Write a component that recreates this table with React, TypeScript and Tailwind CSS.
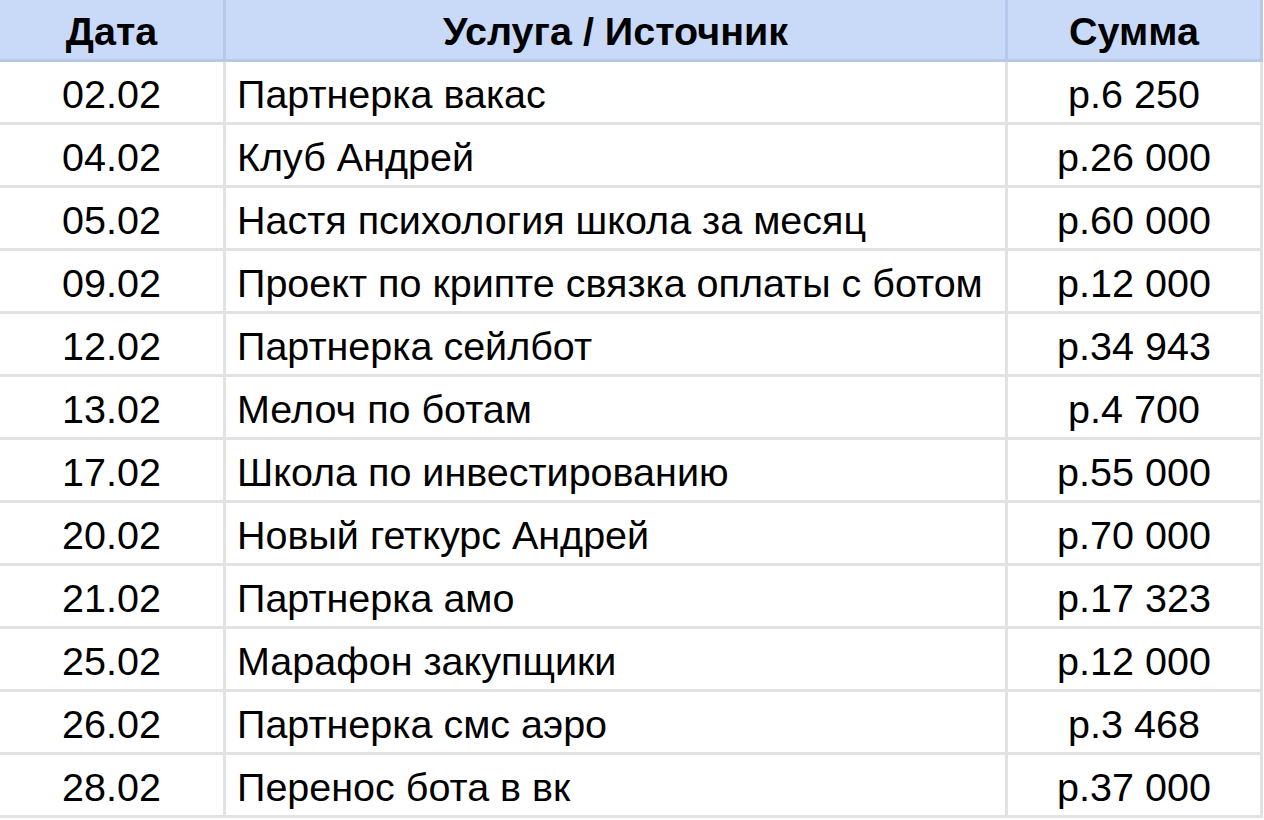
const rows = [
  ["02.02", "Партнерка вакас", "р.6 250"],
  ["04.02", "Клуб Андрей", "р.26 000"],
  ["05.02", "Настя психология школа за месяц", "р.60 000"],
  ["09.02", "Проект по крипте связка оплаты с ботом", "р.12 000"],
  ["12.02", "Партнерка сейлбот", "р.34 943"],
  ["13.02", "Мелоч по ботам", "р.4 700"],
  ["17.02", "Школа по инвестированию", "р.55 000"],
  ["20.02", "Новый геткурс Андрей", "р.70 000"],
  ["21.02", "Партнерка амо", "р.17 323"],
  ["25.02", "Марафон закупщики", "р.12 000"],
  ["26.02", "Партнерка смс аэро", "р.3 468"],
  ["28.02", "Перенос бота в вк", "р.37 000"],
];

export default function App() {
  return (
    <div className="w-[1264px] h-[820px] bg-white overflow-hidden font-['Liberation_Sans',Arial,sans-serif] text-black text-[39.5px] leading-none">
      <div className="grid grid-cols-[226px_782px_255px]">
        <div className="h-[62px] pt-[5px] bg-[#c9daf8] border-r-[3px] border-b-[3px] border-[#b7c9ea] flex items-center justify-center font-bold">
          Дата
        </div>
        <div className="h-[62px] pt-[5px] bg-[#c9daf8] border-r-[3px] border-b-[3px] border-[#b7c9ea] flex items-center justify-center font-bold">
          Услуга / Источник
        </div>
        <div className="h-[62px] pt-[5px] bg-[#c9daf8] border-r-[3px] border-b-[3px] border-[#b7c9ea] flex items-center justify-center font-bold">
          Сумма
        </div>
        {rows.map(([date, name, sum]) => (
          <div key={date} className="contents">
            <div className="h-[63px] pt-[6px] border-r-[3px] border-b-[3px] border-[#e2e2e2] flex items-center justify-center">
              {date}
            </div>
            <div className="h-[63px] pt-[6px] border-r-[3px] border-b-[3px] border-[#e2e2e2] flex items-center pl-[11px] whitespace-nowrap">
              {name}
            </div>
            <div className="h-[63px] pt-[6px] border-r-[3px] border-b-[3px] border-[#e2e2e2] flex items-center justify-center">
              {sum}
            </div>
          </div>
        ))}
      </div>
    </div>
  );
}
